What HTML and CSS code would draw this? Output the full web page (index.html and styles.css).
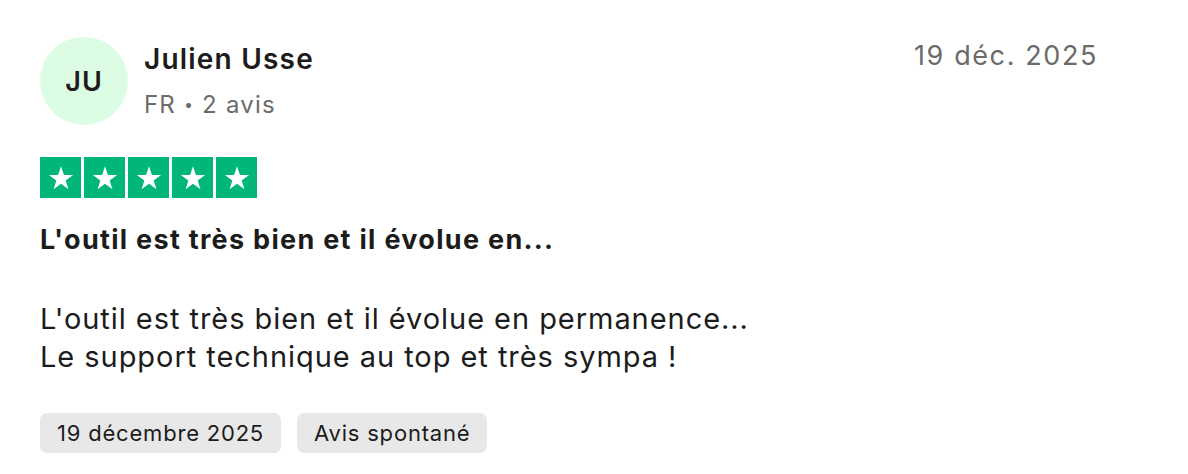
FILE: index.html
```html
<!DOCTYPE html>
<html lang="fr">

<head>
    <meta charset="UTF-8">
    <meta name="viewport" content="width=device-width, initial-scale=1.0">
    <title>Avis</title>
    <link rel="stylesheet" href="styles.css">
</head>

<body>
    <article class="review">
        <header class="review-head">
            <div class="avatar">JU</div>
            <div class="author">
                <p class="author-name">Julien Usse</p>
                <p class="author-meta">FR <span class="dot">•</span> 2 avis</p>
            </div>
            <time class="review-date">19 déc. 2025</time>
        </header>

        <div class="stars">
            <span class="star"><svg viewBox="0 0 24 24"><path d="M12 3.2l2.2 6.6h6.9l-5.6 4.1 2.1 6.6L12 16.4l-5.6 4.1 2.1-6.6-5.6-4.1h6.9z" /></svg></span>
            <span class="star"><svg viewBox="0 0 24 24"><path d="M12 3.2l2.2 6.6h6.9l-5.6 4.1 2.1 6.6L12 16.4l-5.6 4.1 2.1-6.6-5.6-4.1h6.9z" /></svg></span>
            <span class="star"><svg viewBox="0 0 24 24"><path d="M12 3.2l2.2 6.6h6.9l-5.6 4.1 2.1 6.6L12 16.4l-5.6 4.1 2.1-6.6-5.6-4.1h6.9z" /></svg></span>
            <span class="star"><svg viewBox="0 0 24 24"><path d="M12 3.2l2.2 6.6h6.9l-5.6 4.1 2.1 6.6L12 16.4l-5.6 4.1 2.1-6.6-5.6-4.1h6.9z" /></svg></span>
            <span class="star"><svg viewBox="0 0 24 24"><path d="M12 3.2l2.2 6.6h6.9l-5.6 4.1 2.1 6.6L12 16.4l-5.6 4.1 2.1-6.6-5.6-4.1h6.9z" /></svg></span>
        </div>

        <h2 class="review-title">L'outil est très bien et il évolue en...</h2>

        <p class="review-text">L'outil est très bien et il évolue en permanence...<br>Le support technique au top et très sympa !</p>

        <div class="tags">
            <span class="tag">19 décembre 2025</span>
            <span class="tag">Avis spontané</span>
        </div>
    </article>
</body>

</html>
```

FILE: styles.css
```css
body {
    margin: 0;
    background-color: #ffffff;
    font-family: 'Inter', 'Noto Sans', sans-serif;
    color: #1c1c1c;
}

p {
    margin: 0;
}

.review {
    width: 1058px;
    padding: 37px 0 0 40px;
}

.review-head {
    display: flex;
    align-items: flex-start;
}

.avatar {
    width: 88px;
    height: 88px;
    border-radius: 50%;
    background-color: #dcfce3;
    display: flex;
    align-items: center;
    justify-content: center;
    font-size: 27px;
    font-weight: 600;
    letter-spacing: 1px;
    color: #1c1c1c;
    flex-shrink: 0;
}

.author {
    margin-left: 16px;
    flex: 1;
}

.author-name {
    font-size: 28px;
    font-weight: 600;
    letter-spacing: 1.2px;
    line-height: 42px;
    margin-top: 1px;
}

.author-meta {
    font-size: 24px;
    color: #6b6b6b;
    letter-spacing: 1.2px;
    line-height: 34px;
    margin-top: 7px;
}

.dot {
    font-size: 16px;
    vertical-align: 3px;
}

.review-date {
    font-size: 27px;
    color: #6b6b6b;
    letter-spacing: 1.6px;
    line-height: 38px;
}

.stars {
    display: flex;
    gap: 3px;
    margin-top: 32px;
}

.star {
    width: 41px;
    height: 41px;
    background-color: #00b67a;
    display: flex;
    align-items: center;
    justify-content: center;
}

.star svg {
    width: 32px;
    height: 32px;
    fill: #ffffff;
}

.review-title {
    font-size: 27px;
    font-weight: 700;
    letter-spacing: 1.3px;
    line-height: 34px;
    margin: 25px 0 0 0;
}

.review-text {
    font-size: 29px;
    letter-spacing: 0.95px;
    line-height: 38px;
    margin-top: 43px;
}

.tags {
    display: flex;
    gap: 16px;
    margin-top: 37px;
}

.tag {
    background-color: #e8e8e8;
    border-radius: 7px;
    padding: 0 17px;
    height: 40px;
    line-height: 40px;
    font-size: 22px;
    letter-spacing: 0.8px;
}
```
